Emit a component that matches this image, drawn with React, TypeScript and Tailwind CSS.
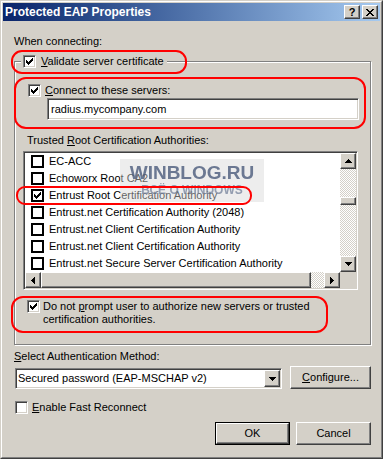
import React from "react";

const TICK = [
  [6, 0], [5, 1], [6, 1], [0, 2], [4, 2], [5, 2], [6, 2],
  [0, 3], [1, 3], [3, 3], [4, 3], [5, 3],
  [0, 4], [1, 4], [2, 4], [3, 4], [4, 4],
  [1, 5], [2, 5], [3, 5], [2, 6],
];

const CLOSE = [
  [0, 0], [1, 0], [6, 0], [7, 0],
  [1, 1], [2, 1], [5, 1], [6, 1],
  [2, 2], [3, 2], [4, 2], [5, 2],
  [3, 3], [4, 3],
  [2, 4], [3, 4], [4, 4], [5, 4],
  [1, 5], [2, 5], [5, 5], [6, 5],
  [0, 6], [1, 6], [6, 6], [7, 6],
];

const Pixels = ({ w, h, px }: { w: number; h: number; px: number[][] }) => (
  <svg width={w} height={h} shapeRendering="crispEdges">
    {px.map(([x, y]) => (
      <rect key={`${x}-${y}`} x={x} y={y} width="1" height="1" fill="#000" />
    ))}
  </svg>
);

const Tick = () => <Pixels w={7} h={7} px={TICK} />;

// small scrollbar / combo arrows
const Arrow = ({ dir }: { dir: "up" | "down" | "left" | "right" }) => {
  const px: number[][] = [];
  for (let i = 0; i < 4; i++) {
    for (let j = 3 - i; j <= 3 + i; j++) {
      if (dir === "up") px.push([j, i]);
      if (dir === "down") px.push([j, 3 - i]);
      if (dir === "left") px.push([i, j]);
      if (dir === "right") px.push([3 - i, j]);
    }
  }
  const horiz = dir === "up" || dir === "down";
  return <Pixels w={horiz ? 7 : 4} h={horiz ? 4 : 7} px={px} />;
};

const raised =
  "bg-[#d4d0c8] border border-t-white border-l-white border-r-[#404040] border-b-[#404040] shadow-[inset_-1px_-1px_0_#808080]";
const sunken =
  "border border-t-[#808080] border-l-[#808080] border-r-white border-b-white shadow-[inset_1px_1px_0_#404040,inset_-1px_-1px_0_#d4d0c8]";
const checker =
  "bg-[repeating-conic-gradient(#d4d0c8_0_25%,#ffffff_0_50%)] bg-size-[2px_2px]";

const CheckBox = ({ checked }: { checked?: boolean }) => (
  <span
    className={`w-[13px] h-[13px] shrink-0 bg-white flex items-center justify-center ${sunken}`}
  >
    {checked && <Tick />}
  </span>
);

const ListCheck = ({ checked }: { checked?: boolean }) => (
  <span className="w-[13px] h-[13px] shrink-0 bg-white border-2 border-black flex items-center justify-center">
    {checked && <Tick />}
  </span>
);

const ScrollBtn = ({ dir }: { dir: "up" | "down" | "left" | "right" }) => (
  <div className={`w-[16px] h-[16px] shrink-0 flex items-center justify-center ${raised}`}>
    <Arrow dir={dir} />
  </div>
);

const certs = [
  { name: "EC-ACC", checked: false },
  { name: "Echoworx Root CA2", checked: false },
  { name: "Entrust Root Certification Authority", checked: true },
  { name: "Entrust.net Certification Authority (2048)", checked: false },
  { name: "Entrust.net Client Certification Authority", checked: false },
  { name: "Entrust.net Client Certification Authority", checked: false },
  { name: "Entrust.net Secure Server Certification Authority", checked: false },
];

const Button = ({ children, isDefault }: { children: React.ReactNode; isDefault?: boolean }) =>
  isDefault ? (
    <div className="w-[75px] h-[23px] border border-black flex">
      <div className={`flex-1 flex items-center justify-center ${raised}`}>{children}</div>
    </div>
  ) : (
    <div className={`w-[75px] h-[23px] flex items-center justify-center ${raised}`}>{children}</div>
  );

export default function App() {
  return (
    <div className="relative w-[383px] h-[459px] bg-[#d4d0c8] border border-t-[#d4d0c8] border-l-[#d4d0c8] border-r-[#404040] border-b-[#404040] font-['Liberation_Sans',Arial,sans-serif] text-[11px] leading-[13px] text-black select-none overflow-hidden">
      <div className="h-full border border-t-white border-l-white border-r-[#808080] border-b-[#808080] p-px flex flex-col">
        {/* title bar */}
        <div className="h-[18px] shrink-0 flex items-center px-[2px] bg-linear-to-r from-[#0a246a] to-[#a6caf0]">
          <span className="flex-1 text-white font-bold text-[12px]">Protected EAP Properties</span>
          <div className="flex gap-[2px]">
            <div className={`w-[16px] h-[14px] flex items-center justify-center font-bold text-[11px] leading-none pt-px ${raised}`}>
              ?
            </div>
            <div className={`w-[16px] h-[14px] flex items-center justify-center ${raised}`}>
              <Pixels w={8} h={7} px={CLOSE} />
            </div>
          </div>
        </div>

        {/* dialog body */}
        <div className="pl-[11px] pr-[9px] flex flex-col">
          <div className="mt-[14px] h-[13px]">When connecting:</div>

          <div className="mt-[13px] h-[284px] border border-[#808080] shadow-[1px_1px_0_#fff,inset_1px_1px_0_#fff] flex flex-col">
            <div className="-mt-[7px] ml-[6px] self-start flex items-center gap-[5px] bg-[#d4d0c8] pl-[2px] pr-[3px] h-[13px]">
              <CheckBox checked />
              <span>
                <u>V</u>alidate server certificate
              </span>
            </div>

            <div className="mt-[16px] ml-[13px] flex items-center gap-[4px] h-[13px]">
              <CheckBox checked />
              <span>
                <u>C</u>onnect to these servers:
              </span>
            </div>
            <div className={`mt-px ml-[32px] w-[312px] h-[22px] bg-white flex items-center pl-[3px] ${sunken}`}>
              radius.mycompany.com
            </div>

            <div className="mt-[14px] ml-[12px] h-[13px]">
              Trusted <u>R</u>oot Certification Authorities:
            </div>

            <div className={`mt-[4px] ml-[8px] w-[335px] h-[139px] bg-white flex flex-col ${sunken} p-px`}>
              <div className="flex h-[119px]">
                <div className="flex-1 flex flex-col overflow-hidden">
                  {certs.map((c, i) => (
                    <div key={i} className="h-[17px] shrink-0 flex items-center pl-[6px] gap-[5px] whitespace-nowrap">
                      <ListCheck checked={c.checked} />
                      <span>{c.name}</span>
                    </div>
                  ))}
                </div>
                <div className="w-[16px] flex flex-col">
                  <ScrollBtn dir="up" />
                  <div className={`h-[28px] ${checker}`} />
                  <div className={`h-[8px] ${raised}`} />
                  <div className={`flex-1 ${checker}`} />
                  <ScrollBtn dir="down" />
                </div>
              </div>
              <div className="flex h-[16px]">
                <ScrollBtn dir="left" />
                <div className={`w-[270px] ${raised}`} />
                <div className={`flex-1 ${checker}`} />
                <ScrollBtn dir="right" />
                <div className="w-[16px] bg-[#d4d0c8]" />
              </div>
            </div>

            <div className="mt-[10px] ml-[12px] flex items-start gap-[3px]">
              <CheckBox checked />
              <span>
                Do not <u>p</u>rompt user to authorize new servers or trusted
                <br />
                certification authorities.
              </span>
            </div>
          </div>

          <div className="mt-[5px] h-[13px]">
            <u>S</u>elect Authentication Method:
          </div>

          <div className="mt-[3px] flex items-start">
            <div className={`mt-[2px] ml-px w-[267px] h-[21px] bg-white flex items-center ${sunken} p-px`}>
              <span className="flex-1 pl-px whitespace-nowrap">Secured password (EAP-MSCHAP v2)</span>
              <div className={`w-[16px] h-[17px] flex items-center justify-center ${raised}`}>
                <Arrow dir="down" />
              </div>
            </div>
            <div className={`ml-[8px] w-[81px] h-[23px] flex items-center justify-center ${raised}`}>
              <span>
                <u>C</u>onfigure...
              </span>
            </div>
          </div>

          <div className="mt-[12px] ml-px flex items-center gap-[4px] h-[13px]">
            <CheckBox />
            <span>
              <u>E</u>nable Fast Reconnect
            </span>
          </div>

          <div className="mt-[8px] flex justify-end gap-[6px]">
            <Button isDefault>OK</Button>
            <Button>Cancel</Button>
          </div>
        </div>
      </div>

      {/* semi-transparent watermark over the list */}
      <div className="absolute left-[119px] top-[158px] w-[144px] h-[43px] bg-[#d8d8d8]/45 flex flex-col items-center pt-[4px] pointer-events-none">
        <span className="blur-[0.7px] font-bold text-[19px] leading-[20px] text-[#4a5a7a]/80">WINBLOG.RU</span>
        <span className="blur-[0.7px] font-bold text-[12px] leading-[14px] text-[#6c7a96]/70">ВСЁ О WINDOWS</span>
      </div>

      {/* red annotation outlines */}
      <div className="absolute left-[10px] top-[49px] w-[176px] h-[24px] border-2 border-[#f00] rounded-[11px] pointer-events-none" />
      <div className="absolute left-[13px] top-[76px] w-[352px] h-[52px] border-2 border-[#f00] rounded-[12px] pointer-events-none" />
      <div className="absolute left-[15px] top-[185px] w-[236px] h-[19px] border-2 border-[#f00] rounded-[9px] pointer-events-none" />
      <div className="absolute left-[10px] top-[295px] w-[317px] h-[37px] border-2 border-[#f00] rounded-[12px] pointer-events-none" />
    </div>
  );
}
